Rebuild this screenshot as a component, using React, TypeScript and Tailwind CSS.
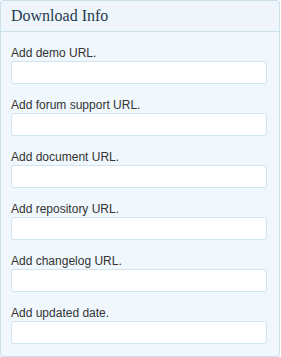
import React from "react";

const fields = [
  "Add demo URL.",
  "Add forum support URL.",
  "Add document URL.",
  "Add repository URL.",
  "Add changelog URL.",
  "Add updated date.",
];

export default function App() {
  return (
    <div className="w-[281px] h-[357px] bg-white">
      <div className="w-[280px] h-[357px] border border-[#cbe0ec] rounded-[3px] bg-[#f0f7fd] overflow-hidden">
        <div className="h-[31px] border-b border-[#cbe0ec] bg-[#eef6fc] pl-[10px] flex items-center">
          <span
            className="text-[16px] text-[#1f3a4d] leading-none"
            style={{ fontFamily: '"Liberation Serif", Georgia, serif' }}
          >
            Download Info
          </span>
        </div>
        <div className="pl-[10px] pr-[12px] pt-[14px] flex flex-col gap-[14px]">
          {fields.map((f) => (
            <div key={f} className="flex flex-col">
              <label
                className="text-[12px] leading-[15px] text-[#333] h-[15px]"
                style={{ fontFamily: '"Liberation Sans", Arial, sans-serif' }}
              >
                {f}
              </label>
              <input
                type="text"
                className="h-[23px] w-[256px] bg-white border border-[#d3e4ef] rounded-[3px] outline-none"
              />
            </div>
          ))}
        </div>
      </div>
    </div>
  );
}
